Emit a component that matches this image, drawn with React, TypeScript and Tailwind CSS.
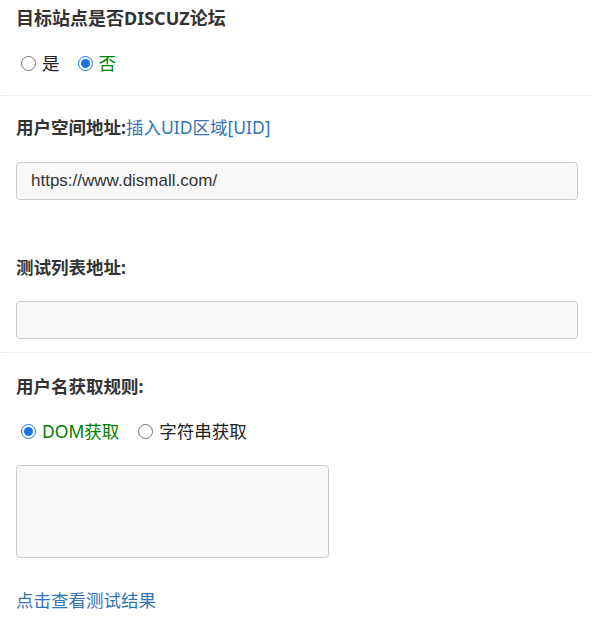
import { useState } from "react"

const font = { fontFamily: '"Noto Sans", "Noto Sans CJK SC", sans-serif' }

function Radio({ checked, label, onClick }: { checked: boolean; label: string; onClick: () => void }) {
  return (
    <label className="flex items-center gap-[6px] cursor-pointer" onClick={onClick}>
      <span
        className={
          checked
            ? "w-[15px] h-[15px] rounded-full border-[1.5px] border-[#1a73e8] flex items-center justify-center bg-white"
            : "w-[15px] h-[15px] rounded-full border border-[#767676] bg-white"
        }
      >
        {checked && <span className="w-[9px] h-[9px] rounded-full bg-[#1a73e8]" />}
      </span>
      <span className={checked ? "text-[#008000]" : "text-[#222]"}>{label}</span>
    </label>
  )
}

export default function App() {
  const [isDiscuz, setIsDiscuz] = useState(false)
  const [rule, setRule] = useState<"dom" | "str">("dom")

  return (
    <div className="w-[592px] bg-white text-[17.5px] leading-[24px] text-[#333]" style={font}>
      {/* 是否DISCUZ */}
      <div className="pl-4 pr-[14px] pt-[6px] pb-[20px] border-b border-dotted border-[#e3e3e3]">
        <div className="font-bold text-[18px]">目标站点是否DISCUZ论坛</div>
        <div className="flex items-center gap-[18px] mt-[21px] pl-[5px]">
          <Radio checked={isDiscuz} label="是" onClick={() => setIsDiscuz(true)} />
          <Radio checked={!isDiscuz} label="否" onClick={() => setIsDiscuz(false)} />
        </div>
      </div>

      {/* 地址 */}
      <div className="pl-4 pr-[14px] pt-[19px] pb-[13px] border-b border-dotted border-[#e3e3e3]">
        <div>
          <span className="font-bold">用户空间地址:</span>
          <a className="text-[#3273b5] cursor-pointer">插入UID区域[UID]</a>
        </div>
        <input
          className="mt-[23px] w-full h-[38px] px-[14px] bg-[#f9f9f9] border border-[#ccc] rounded-[4px] outline-none text-[17px] text-[#333]"
          style={{ fontFamily: '"Liberation Sans", Arial, sans-serif' }}
          defaultValue="https://www.dismall.com/"
        />
        <div className="font-bold mt-[55px]">测试列表地址:</div>
        <input
          className="mt-[22px] w-full h-[38px] px-[14px] bg-[#f9f9f9] border border-[#ccc] rounded-[4px] outline-none text-[17px]"
          style={{ fontFamily: '"Liberation Sans", Arial, sans-serif' }}
        />
      </div>

      {/* 用户名规则 */}
      <div className="pl-4 pr-[14px] pt-[21px] pb-[6px]">
        <div className="font-bold">用户名获取规则:</div>
        <div className="flex items-center gap-[19px] mt-[21px] pl-[5px]">
          <Radio checked={rule === "dom"} label="DOM获取" onClick={() => setRule("dom")} />
          <Radio checked={rule === "str"} label="字符串获取" onClick={() => setRule("str")} />
        </div>
        <textarea className="block mt-[22px] w-[313px] h-[93px] bg-[#f9f9f9] border border-[#ccc] rounded-[4px] outline-none resize-none" />
        <a className="block mt-[30px] text-[#3273b5] cursor-pointer">点击查看测试结果</a>
      </div>
    </div>
  )
}
